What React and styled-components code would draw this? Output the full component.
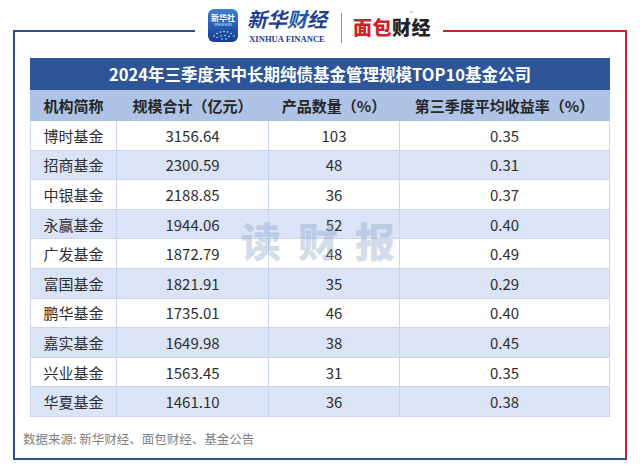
import React from 'react';
import styled, { createGlobalStyle } from 'styled-components';

const GlobalStyle = createGlobalStyle`
  html, body {
    margin: 0;
    padding: 0;
    background: #fff;
  }
  body {
    font-family: "Noto Sans CJK SC", "Noto Sans", sans-serif;
  }
`;

const BLUE = '#2c4f8e';
const RED = '#c3262e';

const Page = styled.div`
  width: 640px;
  height: 470px;
  box-sizing: border-box;
  padding: 5px 13px 0 13px;
  overflow: hidden;
`;

const TopRow = styled.div`
  display: flex;
  align-items: flex-start;
  height: 38px;
`;

const Segment = styled.div`
  box-sizing: border-box;
  margin-top: 25px;
  height: 13px;
  border-top: 2px solid ${({ side }) => (side === 'left' ? BLUE : RED)};
  border-left: ${({ side }) => (side === 'left' ? `2px solid ${BLUE}` : 'none')};
  border-right: ${({ side }) => (side === 'right' ? `2px solid ${RED}` : 'none')};
  width: ${({ side }) => (side === 'left' ? '182px' : 'auto')};
  flex: ${({ side }) => (side === 'right' ? 1 : 'none')};
`;

const LogoGroup = styled.div`
  display: flex;
  align-items: flex-start;
  padding: 0 12px 0 13px;
`;

const NewsIcon = styled.svg`
  margin-top: 4px;
  width: 30px;
  height: 33px;
  display: block;
`;

const XinhuaText = styled.div`
  margin-left: 9px;
  margin-top: 1px;
  display: flex;
  flex-direction: column;
  align-items: center;
  width: 80px;
`;

const XinhuaCn = styled.div`
  font-size: 20px;
  line-height: 26px;
  font-weight: 700;
  font-style: italic;
  color: #1d3c8c;
  span {
    color: #2256a8;
  }
`;

const XinhuaEn = styled.div`
  font-family: "Liberation Serif", serif;
  font-weight: 700;
  font-size: 8.6px;
  line-height: 10px;
  color: #1d3c8c;
  margin-top: 2px;
  white-space: nowrap;
`;

const Divider = styled.div`
  width: 1px;
  height: 30px;
  margin: 8px 11px 0 14px;
  background: #c9777b;
`;

const Mianbao = styled.div`
  position: relative;
  margin-top: 11px;
  font-size: 19px;
  line-height: 22px;
  font-weight: 900;
  color: #222;
  letter-spacing: 0.5px;
  span {
    color: #d0222a;
  }
`;

const Registered = styled.i`
  position: absolute;
  top: -6px;
  left: 57px;
  font-style: normal;
  font-size: 5px;
  line-height: 6px;
  font-weight: 400;
  color: #888;
`;

const Body = styled.div`
  border-left: 2px solid ${BLUE};
  border-right: 2px solid ${RED};
  border-bottom: 2px solid ${BLUE};
  padding: 15px 16px 9px 15px;
`;

const TableWrap = styled.div`
  position: relative;
  width: 579px;
`;

const Table = styled.table`
  width: 579px;
  border-collapse: collapse;
  table-layout: fixed;
  color: #2e2e2e;
`;

const TitleCell = styled.th`
  height: 30px;
  padding: 0;
  background: #2d5597;
  color: #fff;
  font-size: 16.5px;
  font-weight: 700;
  text-align: center;
  border: 1px solid #2d5597;
`;

const HeadCell = styled.th`
  height: 30px;
  padding: 0;
  background: #aec3e6;
  font-size: 15px;
  font-weight: 700;
  color: #262626;
  text-align: center;
  border: 1px solid #aec3e6;
  border-left: 1px solid #dfe8f6;
  &:first-child {
    border-left: 1px solid #aec3e6;
  }
`;

const Row = styled.tr`
  background: ${({ shade }) => (shade ? '#dae4f6' : '#fff')};
`;

const Cell = styled.td`
  height: 29.6px;
  padding: 0;
  box-sizing: border-box;
  font-size: 15px;
  text-align: center;
  border: 1px solid #c8d6ee;
`;

const Watermark = styled.div`
  position: absolute;
  left: 211px;
  top: 158px;
  font-size: 40px;
  line-height: 48px;
  font-weight: 900;
  letter-spacing: 17px;
  color: rgba(140, 162, 198, 0.4);
  pointer-events: none;
  white-space: nowrap;
`;

const Source = styled.div`
  margin: 12px 0 0 -7px;
  font-size: 12.5px;
  line-height: 20px;
  color: #7f7f7f;
`;

const rows = [
  ['博时基金', '3156.64', '103', '0.35'],
  ['招商基金', '2300.59', '48', '0.31'],
  ['中银基金', '2188.85', '36', '0.37'],
  ['永赢基金', '1944.06', '52', '0.40'],
  ['广发基金', '1872.79', '48', '0.49'],
  ['富国基金', '1821.91', '35', '0.29'],
  ['鹏华基金', '1735.01', '46', '0.40'],
  ['嘉实基金', '1649.98', '38', '0.45'],
  ['兴业基金', '1563.45', '31', '0.35'],
  ['华夏基金', '1461.10', '36', '0.38'],
];

const dots = [
  [6, 27], [9, 24.5], [12.5, 23], [16, 22.5], [19.5, 23], [23, 24.5], [26, 27],
  [9, 28.5], [13, 27], [17, 26.5], [21, 27.5], [14, 30], [18, 30],
];

const App = () => (
  <>
    <GlobalStyle />
    <Page>
      <TopRow>
        <Segment side="left" />
        <LogoGroup>
          <NewsIcon viewBox="0 0 30 33">
            <defs>
              <linearGradient id="xh" x1="0" y1="0" x2="0" y2="1">
                <stop offset="0" stopColor="#3d7fd0" />
                <stop offset="1" stopColor="#123f8f" />
              </linearGradient>
            </defs>
            <rect x="0" y="0" width="30" height="33" rx="6" fill="url(#xh)" />
            <text x="15" y="12" fontSize="8" fill="#fff" textAnchor="middle" fontWeight="700"
              fontFamily="Noto Sans CJK SC, sans-serif">新华社</text>
            <text x="15" y="17" fontSize="2.6" fill="#dbe8ff" textAnchor="middle"
              fontFamily="Liberation Sans, sans-serif">XINHUA NEWS</text>
            {dots.map(([cx, cy], i) => (
              <circle key={i} cx={cx} cy={cy} r="0.8" fill="#cfe2ff" />
            ))}
          </NewsIcon>
          <XinhuaText>
            <XinhuaCn>新华<span>财</span>经</XinhuaCn>
            <XinhuaEn>XINHUA FINANCE</XinhuaEn>
          </XinhuaText>
          <Divider />
          <Mianbao>
            <span>面包</span>财经
            <Registered>®</Registered>
          </Mianbao>
        </LogoGroup>
        <Segment side="right" />
      </TopRow>
      <Body>
        <TableWrap>
          <Table>
            <colgroup>
              <col style={{ width: 86 }} />
              <col style={{ width: 152 }} />
              <col style={{ width: 131 }} />
              <col style={{ width: 210 }} />
            </colgroup>
            <thead>
              <tr>
                <TitleCell colSpan={4}>2024年三季度末中长期纯债基金管理规模TOP10基金公司</TitleCell>
              </tr>
              <tr>
                <HeadCell>机构简称</HeadCell>
                <HeadCell>规模合计（亿元）</HeadCell>
                <HeadCell>产品数量（%）</HeadCell>
                <HeadCell>第三季度平均收益率（%）</HeadCell>
              </tr>
            </thead>
            <tbody>
              {rows.map((r, i) => (
                <Row key={r[0]} shade={i % 2 === 1}>
                  {r.map((v, j) => (
                    <Cell key={j}>{v}</Cell>
                  ))}
                </Row>
              ))}
            </tbody>
          </Table>
          <Watermark>读财报</Watermark>
        </TableWrap>
        <Source>数据来源: 新华财经、面包财经、基金公告</Source>
      </Body>
    </Page>
  </>
);

export default App;
